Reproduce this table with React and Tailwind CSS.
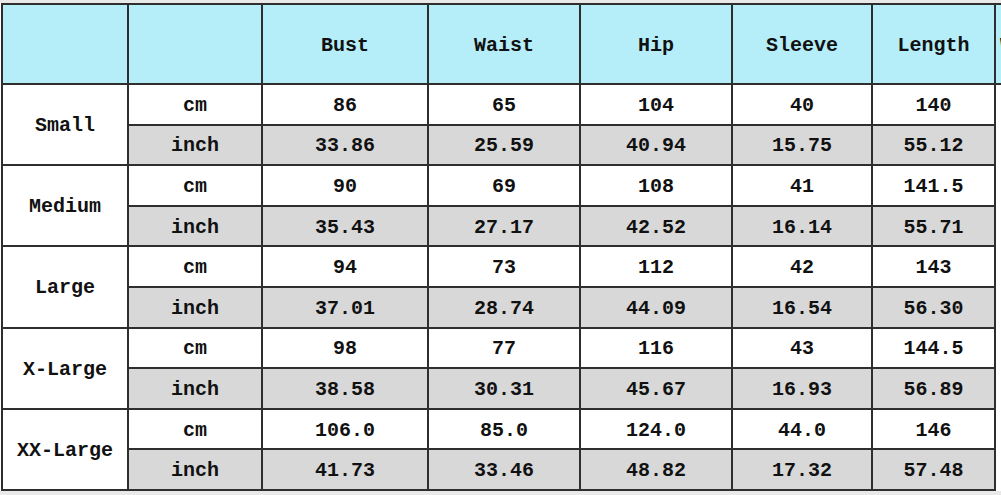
const headers = ['Bust', 'Waist', 'Hip', 'Sleeve', 'Length'];

const sizes = [
  { name: 'Small', cm: ['86', '65', '104', '40', '140'], inch: ['33.86', '25.59', '40.94', '15.75', '55.12'] },
  { name: 'Medium', cm: ['90', '69', '108', '41', '141.5'], inch: ['35.43', '27.17', '42.52', '16.14', '55.71'] },
  { name: 'Large', cm: ['94', '73', '112', '42', '143'], inch: ['37.01', '28.74', '44.09', '16.54', '56.30'] },
  { name: 'X-Large', cm: ['98', '77', '116', '43', '144.5'], inch: ['38.58', '30.31', '45.67', '16.93', '56.89'] },
  { name: 'XX-Large', cm: ['106.0', '85.0', '124.0', '44.0', '146'], inch: ['41.73', '33.46', '48.82', '17.32', '57.48'] },
];

const cell = 'border-2 border-[#2e2e2e] text-center align-middle px-0 pt-[3px] pb-0';

const App = () => {
  return (
    <div className="w-[1001px] h-[495px] overflow-hidden bg-[#e9e9e9] pt-[3px] font-['Liberation_Mono',monospace] font-bold text-[20px] text-[#111111]">
      <div className="bg-white w-[1001px] overflow-hidden pl-[1px]">
        <table className="border-collapse table-fixed w-[1040px]">
          <colgroup>
            <col className="w-[126px]" />
            <col className="w-[134px]" />
            <col className="w-[166px]" />
            <col className="w-[152px]" />
            <col className="w-[152px]" />
            <col className="w-[140px]" />
            <col className="w-[123px]" />
            <col className="w-[47px]" />
          </colgroup>
          <thead>
            <tr className="h-[80px] bg-[#b5eef9]">
              <th className={cell}></th>
              <th className={cell}></th>
              {headers.map((h) => (
                <th key={h} className={cell + ' font-bold'}>
                  {h}
                </th>
              ))}
              <th className="border-y-2 border-l-2 border-[#2e2e2e] text-left align-middle pl-[4px] pt-[3px] font-bold">
                Weight
              </th>
            </tr>
          </thead>
          <tbody>
            {sizes.map((s) => (
              <>
                <tr key={s.name + 'cm'} className="h-[40.6px] bg-white">
                  <td rowSpan={2} className={cell + ' bg-white'}>
                    {s.name}
                  </td>
                  <td className={cell}>cm</td>
                  {s.cm.map((v, i) => (
                    <td key={i} className={cell}>
                      {v}
                    </td>
                  ))}
                </tr>
                <tr key={s.name + 'in'} className="h-[40.6px] bg-[#d8d8d8]">
                  <td className={cell}>inch</td>
                  {s.inch.map((v, i) => (
                    <td key={i} className={cell}>
                      {v}
                    </td>
                  ))}
                </tr>
              </>
            ))}
          </tbody>
        </table>
      </div>
    </div>
  );
};

export default App;
